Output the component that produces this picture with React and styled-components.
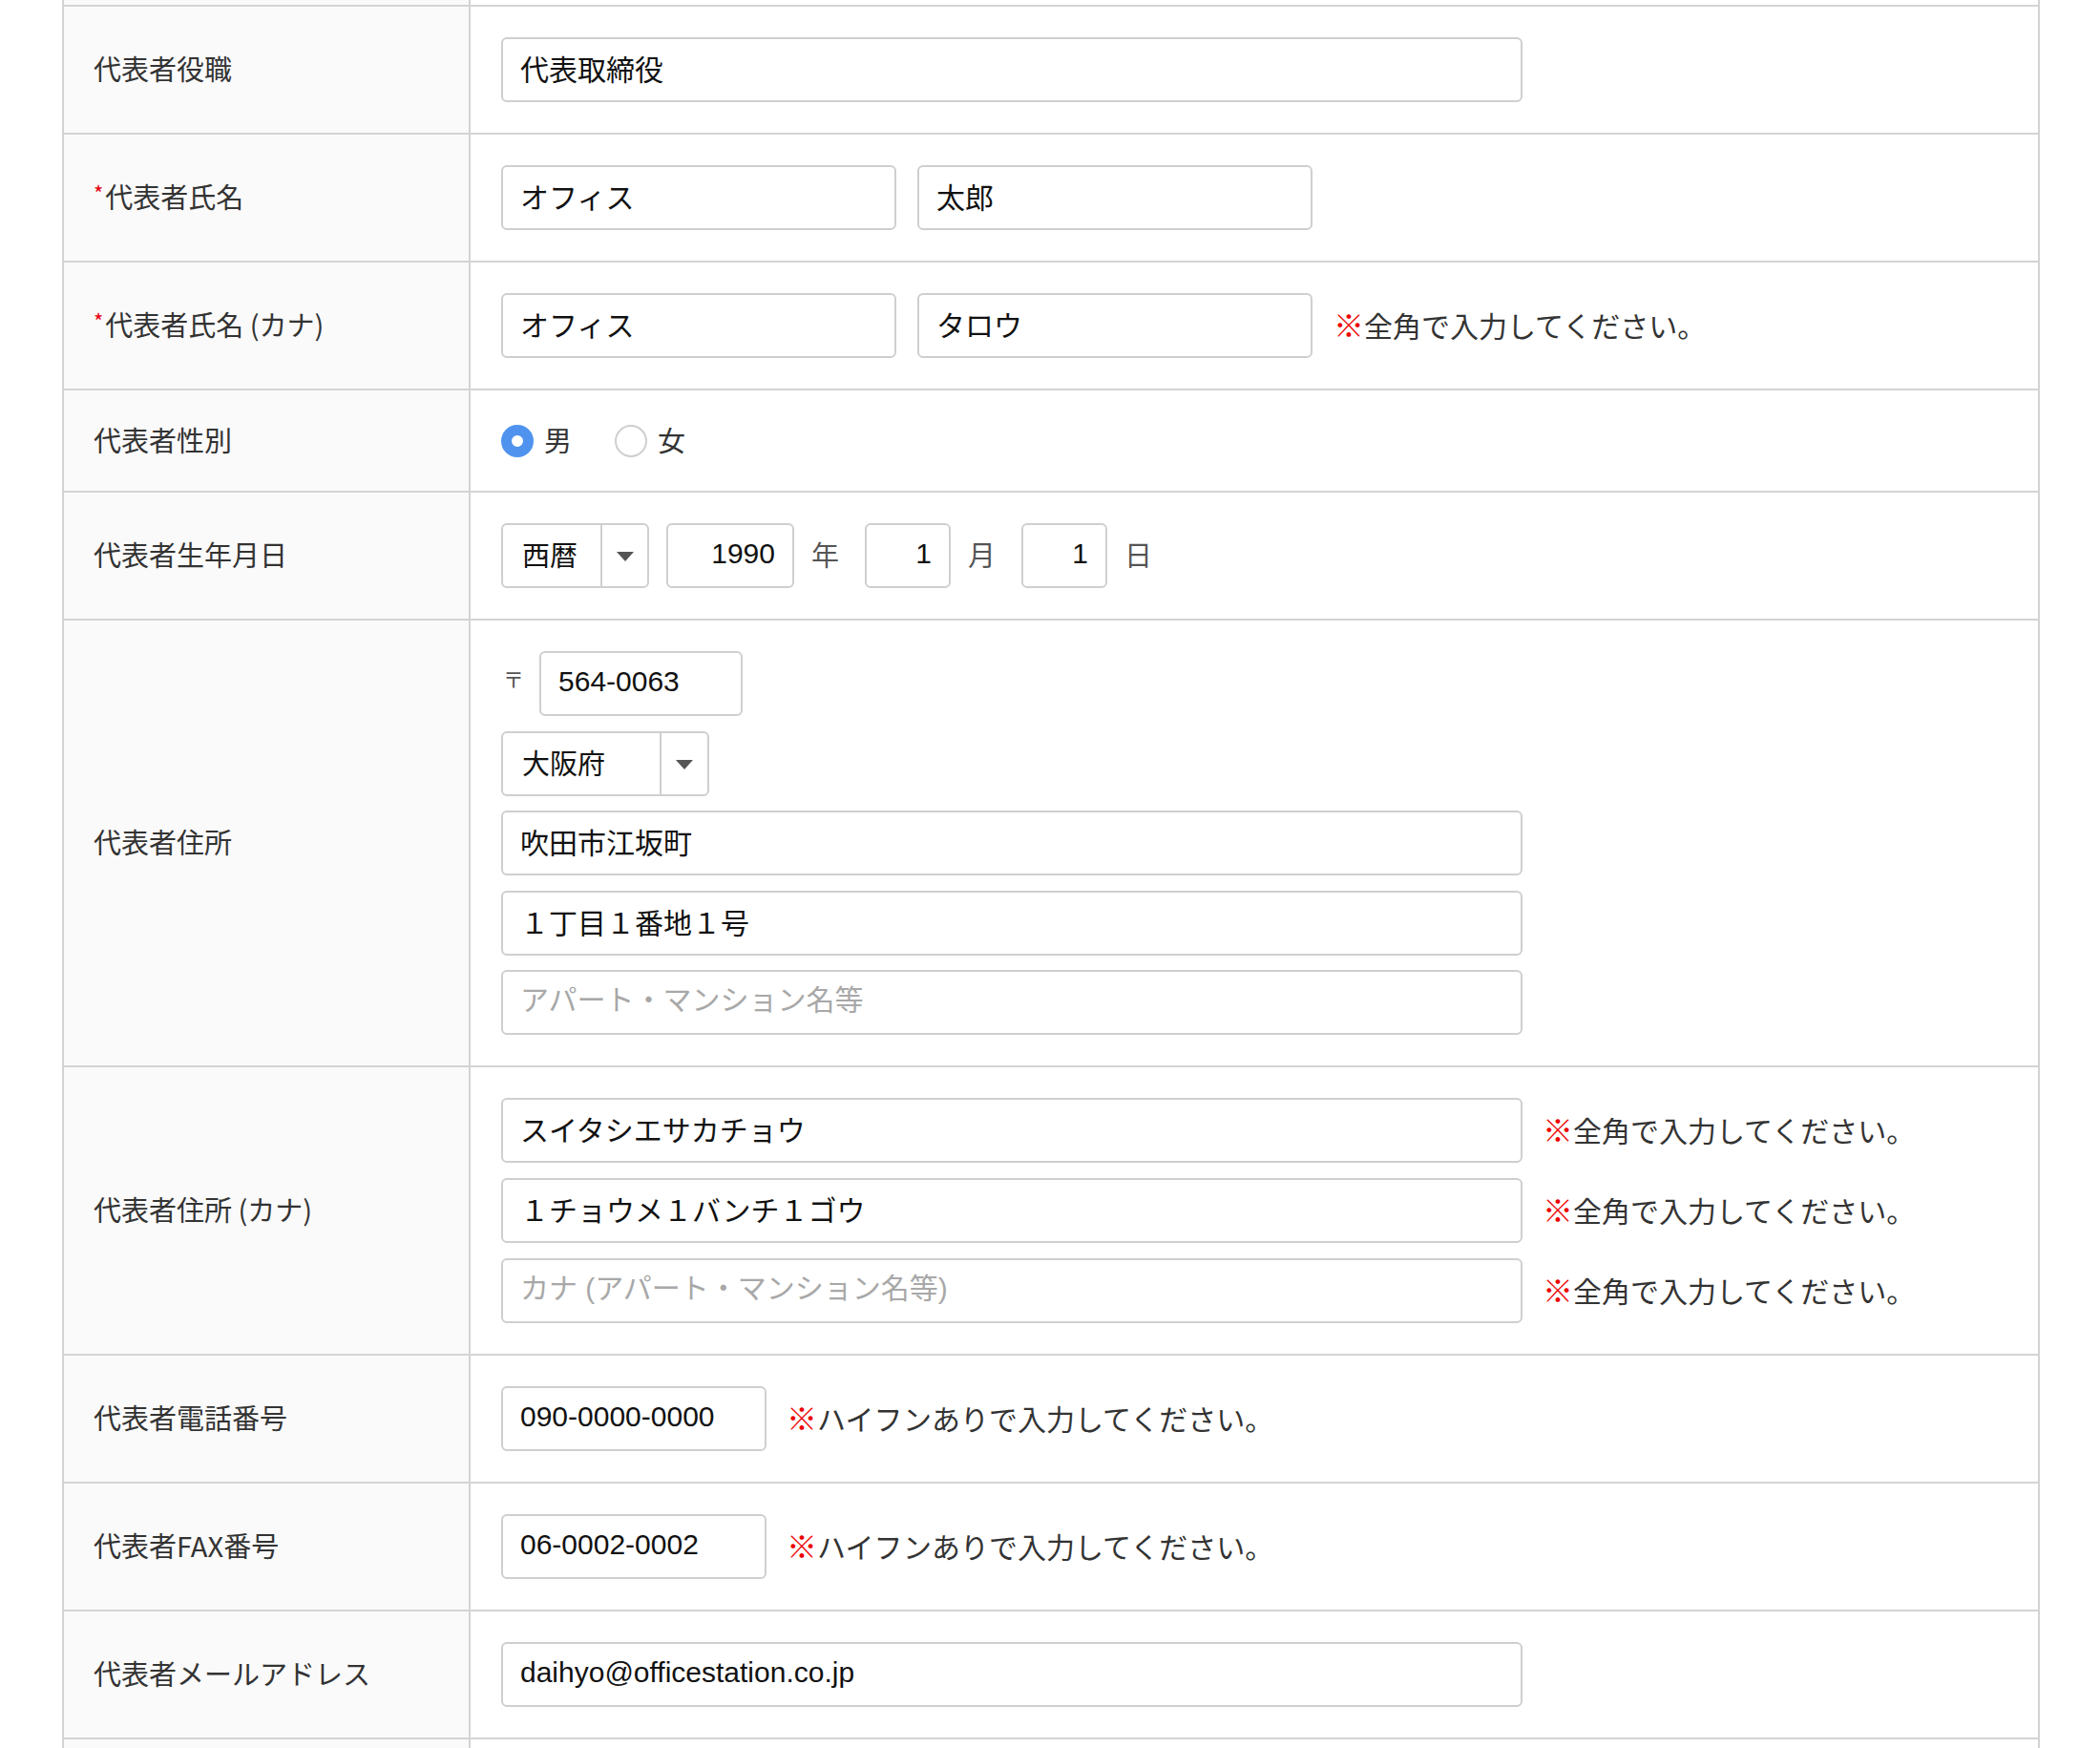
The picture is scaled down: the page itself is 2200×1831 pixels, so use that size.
import React from 'react';
import styled, { createGlobalStyle } from 'styled-components';

const GlobalStyle = createGlobalStyle`
  body {
    margin: 0;
    background: #ffffff;
    font-family: "Liberation Sans", "Noto Sans CJK JP", sans-serif;
    color: #333;
  }
`;

const Table = styled.div`
  margin-left: 65px;
  width: 2072px;
  box-sizing: border-box;
  border-left: 2px solid #d4d4d4;
  border-right: 2px solid #d4d4d4;
`;

const Row = styled.div`
  display: grid;
  grid-template-columns: 426px 1fr;
  border-bottom: ${p => (p.$last ? 'none' : '2px solid #d4d4d4')};
  height: ${p => (p.$h ? p.$h + 'px' : 'auto')};
`;

const Label = styled.div`
  background: #fafafa;
  border-right: 2px solid #d4d4d4;
  display: flex;
  align-items: center;
  padding: 0 0 4px 31px;
  font-family: "Noto Sans CJK JP", sans-serif;
  font-size: 29px;
  color: #333;
  white-space: nowrap;
`;

const Req = styled.span`
  color: #e60012;
  font-size: 22px;
  position: relative;
  top: -4px;
  margin-right: 2px;
`;

const Value = styled.div`
  padding: ${p => (p.$stub ? '0' : '32px 0 32px 32px')};
  display: flex;
  flex-direction: column;
  justify-content: center;
  gap: ${p => p.$gap || 16}px;
  background: #fff;
`;

const Line = styled.div`
  display: flex;
  align-items: center;
  gap: ${p => p.$gap || 21}px;
  height: ${p => p.$h || 68}px;
`;

const Field = styled.input`
  box-sizing: border-box;
  width: ${p => p.$w}px;
  height: 68px;
  margin: 0;
  border: 2px solid #cfcfcf;
  border-radius: 6px;
  padding: 0 18px 4px;
  font-family: "Liberation Sans", "Noto Sans CJK JP", sans-serif;
  font-size: 30px;
  color: #111;
  text-align: ${p => (p.$right ? 'right' : 'left')};
  background: #fff;
  outline: none;
  &::placeholder {
    color: #a8a8a8;
  }
`;

const Note = styled.span`
  font-family: "Noto Sans CJK JP", sans-serif;
  font-size: 30px;
  color: #333;
  white-space: nowrap;
  padding-bottom: 4px;
  b {
    color: #ee0000;
    font-weight: 700;
    font-size: 32px;
  }
`;

const SelectBox = styled.div`
  box-sizing: border-box;
  width: ${p => p.$w}px;
  height: 68px;
  border: 2px solid #cfcfcf;
  border-radius: 6px;
  display: grid;
  grid-template-columns: 1fr ${p => p.$arrow}px;
  background: #fff;
`;

const SelectText = styled.div`
  display: flex;
  align-items: center;
  padding: 0 0 4px 20px;
  font-family: "Noto Sans CJK JP", sans-serif;
  font-size: 29px;
  color: #111;
`;

const SelectArrow = styled.div`
  border-left: 2px solid #cfcfcf;
  display: flex;
  align-items: center;
  justify-content: center;
  &::after {
    content: '';
    border-left: 9px solid transparent;
    border-right: 9px solid transparent;
    border-top: 10px solid #555;
    margin-top: 2px;
  }
`;

const Unit = styled.span`
  font-family: "Noto Sans CJK JP", sans-serif;
  font-size: 29px;
  color: #555;
  margin-right: 9px;
  padding-bottom: 4px;
`;

const Postal = styled.span`
  font-family: "Noto Sans CJK JP", sans-serif;
  font-size: 22px;
  color: #555;
  position: relative;
  top: -6px;
  margin-left: 2px;
`;

const RadioGroup = styled.div`
  display: flex;
  align-items: center;
  height: 41px;
`;

const RadioItem = styled.label`
  display: flex;
  align-items: center;
  gap: 11px;
  margin-right: 45px;
  font-family: "Noto Sans CJK JP", sans-serif;
  font-size: 29px;
  color: #333;
  span:last-child {
    padding-bottom: 4px;
  }
`;

const RadioDot = styled.span`
  box-sizing: border-box;
  width: 34px;
  height: 34px;
  border-radius: 50%;
  border: ${p => (p.$on ? '11px solid #4f93ee' : '2px solid #cfcfcf')};
  background: #fff;
`;

const FieldRow = ({ label, req, gap, children }) => (
  <Row>
    <Label>
      {req && <Req>*</Req>}
      {label}
    </Label>
    <Value $gap={gap}>{children}</Value>
  </Row>
);

const ZenNote = () => (
  <Note>
    <b>※</b>全角で入力してください。
  </Note>
);

const HyphenNote = () => (
  <Note>
    <b>※</b>ハイフンありで入力してください。
  </Note>
);

const App = () => {
  return (
    <>
      <GlobalStyle />
      <Table>
        <Row $h={5}>
          <Label />
          <Value $stub />
        </Row>

        <FieldRow label="代表者役職">
          <Line>
            <Field $w={1070} defaultValue="代表取締役" />
          </Line>
        </FieldRow>

        <FieldRow label="代表者氏名" req>
          <Line $gap={22}>
            <Field $w={414} defaultValue="オフィス" />
            <Field $w={414} defaultValue="太郎" />
          </Line>
        </FieldRow>

        <FieldRow label="代表者氏名 (カナ)" req>
          <Line $gap={22}>
            <Field $w={414} defaultValue="オフィス" />
            <Field $w={414} defaultValue="タロウ" />
            <ZenNote />
          </Line>
        </FieldRow>

        <FieldRow label="代表者性別">
          <RadioGroup>
            <RadioItem>
              <RadioDot $on />
              <span>男</span>
            </RadioItem>
            <RadioItem>
              <RadioDot />
              <span>女</span>
            </RadioItem>
          </RadioGroup>
        </FieldRow>

        <FieldRow label="代表者生年月日">
          <Line $gap={18}>
            <SelectBox $w={155} $arrow={49}>
              <SelectText>西暦</SelectText>
              <SelectArrow />
            </SelectBox>
            <Field $w={134} $right defaultValue="1990" />
            <Unit>年</Unit>
            <Field $w={90} $right defaultValue="1" />
            <Unit>月</Unit>
            <Field $w={90} $right defaultValue="1" />
            <Unit>日</Unit>
          </Line>
        </FieldRow>

        <FieldRow label="代表者住所" gap={15.5}>
          <Line $gap={16}>
            <Postal>〒</Postal>
            <Field $w={213} defaultValue="564-0063" />
          </Line>
          <Line>
            <SelectBox $w={218} $arrow={50}>
              <SelectText>大阪府</SelectText>
              <SelectArrow />
            </SelectBox>
          </Line>
          <Line>
            <Field $w={1070} defaultValue="吹田市江坂町" />
          </Line>
          <Line>
            <Field $w={1070} defaultValue="１丁目１番地１号" />
          </Line>
          <Line>
            <Field $w={1070} placeholder="アパート・マンション名等" />
          </Line>
        </FieldRow>

        <FieldRow label="代表者住所 (カナ)">
          <Line>
            <Field $w={1070} defaultValue="スイタシエサカチョウ" />
            <ZenNote />
          </Line>
          <Line>
            <Field $w={1070} defaultValue="１チョウメ１バンチ１ゴウ" />
            <ZenNote />
          </Line>
          <Line>
            <Field $w={1070} placeholder="カナ (アパート・マンション名等)" />
            <ZenNote />
          </Line>
        </FieldRow>

        <FieldRow label="代表者電話番号">
          <Line>
            <Field $w={278} defaultValue="090-0000-0000" />
            <HyphenNote />
          </Line>
        </FieldRow>

        <FieldRow label="代表者FAX番号">
          <Line>
            <Field $w={278} defaultValue="06-0002-0002" />
            <HyphenNote />
          </Line>
        </FieldRow>

        <FieldRow label="代表者メールアドレス">
          <Line>
            <Field $w={1070} defaultValue="daihyo@officestation.co.jp" />
          </Line>
        </FieldRow>

        <Row $h={12} $last>
          <Label />
          <Value $stub />
        </Row>
      </Table>
    </>
  );
};

export default App;
